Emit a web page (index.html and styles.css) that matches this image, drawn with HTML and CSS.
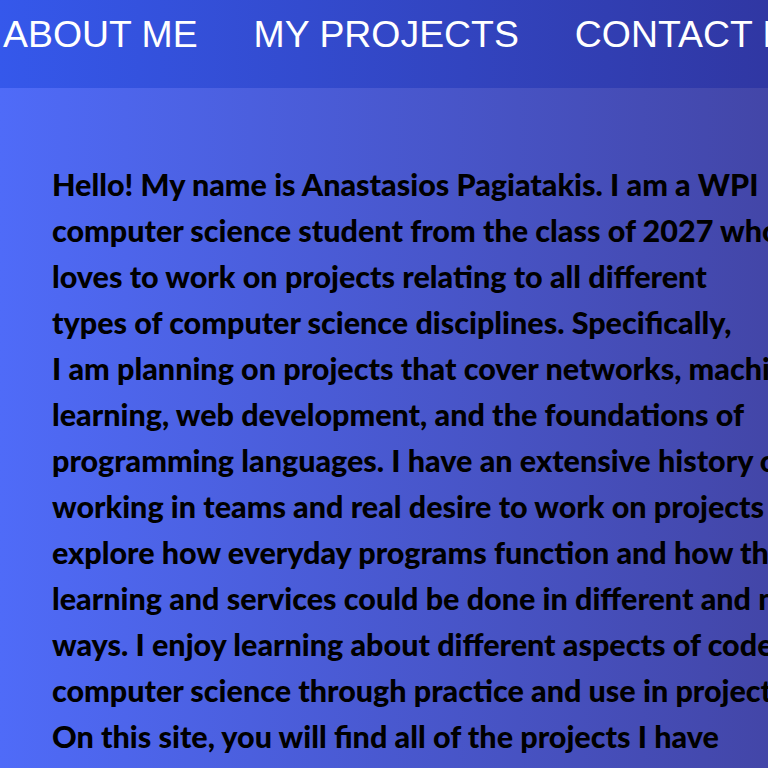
FILE: index.html
```html
<!DOCTYPE html>
<html lang="en">
<head>
<meta charset="utf-8">
<title>About Me</title>
<link rel="stylesheet" href="styles.css">
</head>
<body>
<div class="page">
  <nav class="topnav">
    <a class="navlink" href="#about">ABOUT ME</a>
    <a class="navlink" href="#projects">MY PROJECTS</a>
    <a class="navlink" href="#contact">CONTACT ME</a>
  </nav>
  <main class="content">
    <p class="intro">Hello! My name is Anastasios Pagiatakis. I am a WPI<br>computer science student from the class of 2027 who<br>loves to work on projects relating to all different<br>types of computer science disciplines. Specifically,<br>I am planning on projects that cover networks, machine<br>learning, web development, and the foundations of<br>programming languages. I have an extensive history of<br>working in teams and real desire to work on projects that<br>explore how everyday programs function and how they<br>learning and services could be done in different and new<br>ways. I enjoy learning about different aspects of code and<br>computer science through practice and use in projects.<br>On this site, you will find all of the projects I have</p>
  </main>
</div>
</body>
</html>
```

FILE: styles.css
```css
html, body {
  margin: 0;
  padding: 0;
}
body {
  overflow: hidden;
  background: linear-gradient(to right, #4f6bf8, #4346a8);
}
.page {
  width: 768px;
  height: 768px;
  overflow: hidden;
  display: flex;
  flex-direction: column;
}
.topnav {
  height: 88px;
  box-sizing: border-box;
  padding: 13px 0 0 3px;
  display: flex;
  gap: 56px;
  white-space: nowrap;
  background: linear-gradient(to right, #3558eb, #3037a3);
  flex-shrink: 0;
}
.navlink {
  font-family: "Liberation Sans", Arial, sans-serif;
  font-size: 37.4px;
  color: #ffffff;
  text-decoration: none;
  line-height: 1.15;
}
.content {
  flex: 1;
  padding: 73px 0 0 52px;
  background: linear-gradient(to right, #4f6bf8, #4346a8);
}
.intro {
  margin: 0;
  font-family: Lato, "Noto Sans", sans-serif;
  font-weight: 900;
  font-size: 30.5px;
  line-height: 46px;
  color: #000000;
  white-space: nowrap;
}
```
